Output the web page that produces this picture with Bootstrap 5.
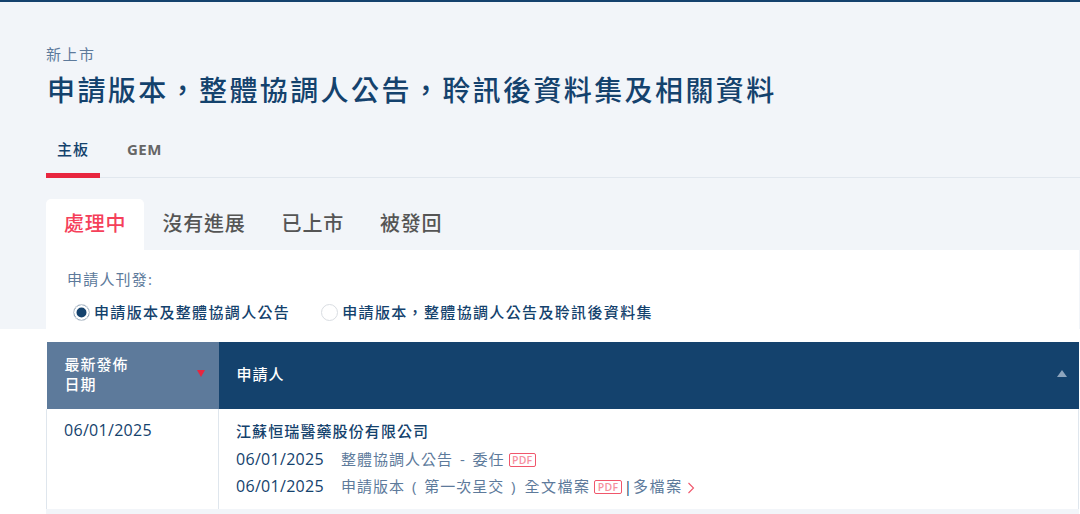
<!DOCTYPE html>
<html lang="zh-Hant">
<head>
    <meta charset="UTF-8">
    <title>新上市</title>
    <link href="https://cdn.jsdelivr.net/npm/bootstrap@5.3.0/dist/css/bootstrap.min.css" rel="stylesheet">
    <style>
        html, body { height: 514px; overflow: hidden; }
        body {
            font-family: "Open Sans", "Noto Sans CJK TC", sans-serif;
            color: #14426d;
            background: linear-gradient(#f2f5f9 329px, #fff 329px);
            border-top: 2px solid #14426d;
        }
        .page-wrap { padding-left: 46px; padding-right: 1px; }
        .crumb { font-size: 15px; letter-spacing: 1.5px; color: #5d7a9b; padding-top: 40px; line-height: 24px; margin: 0; }
        .page-title { font-size: 28px; font-weight: 500; letter-spacing: 2.4px; color: #14426d; line-height: 40px; margin: 4px 0 0 1px; }
        .board-tabs { margin-top: 25px; border-bottom: 1px solid #e1e7ee; margin-right: -1px; height: 43px; }
        .board-tabs .nav-link { font-size: 15px; font-weight: 500; letter-spacing: 1px; color: #666; padding: 0; width: 54px; text-align: center; height: 43px; line-height: 29px; border-radius: 0; }
        .board-tabs .nav-link.gem { width: auto; font-weight: 700; letter-spacing: .5px; }
        .board-tabs .nav-item + .nav-item { margin-left: 27px; }
        .board-tabs .nav-link.active { color: #14426d; border-bottom: 5px solid #e8263f; }
        .status-tabs { margin-top: 21px; height: 51px; }
        .status-tabs .nav-link { font-size: 20px; font-weight: 500; letter-spacing: .8px; color: #555; padding: 0 18px 2px; line-height: 49px; height: 51px; border-radius: 0; }
        .status-tabs .nav-link.active { background: #fff; color: #f5405a; border-radius: 5px 5px 0 0; }
        .filter-panel { background: #fff; height: 92px; padding: 18px 21px 0; }
        .filter-label { font-size: 15px; letter-spacing: 1.2px; color: #5d7a9b; line-height: 22px; }
        .radio-row { margin-top: 11px; gap: 31px; padding-left: 6px; }
        .radio-item { gap: 4px; font-size: 15px; font-weight: 500; letter-spacing: 1.35px; line-height: 22px; color: #14426d; }
        .radio-dot { width: 17px; height: 17px; border: 1px solid #d9dde2; border-radius: 50%; background: #fff; }
        .radio-dot.checked { background: #14426d; box-shadow: inset 0 0 0 2.5px #fff; }
        .listing-table { table-layout: fixed; width: 100%; margin: 0; border-collapse: collapse; }
        .listing-table th { background: #14426d; color: #fff; font-size: 15px; font-weight: 500; letter-spacing: 1px; height: 67px; padding: 0 18px 4px; line-height: 20px; vertical-align: middle; border: 0; }
        .listing-table th.sorted { background: #5d7a9b; width: 172px; }
        .sort-down { width: 0; height: 0; border-left: 4.5px solid transparent; border-right: 4.5px solid transparent; border-top: 7px solid #e8263f; margin-right: -4px; }
        .sort-up { width: 0; height: 0; border-left: 5px solid transparent; border-right: 5px solid transparent; border-bottom: 7px solid #8ea5bd; margin-right: -6px; }
        .listing-table td { height: 100px; padding: 11px 17px 0; vertical-align: top; font-size: 16px; color: #14426d; border: 0; border-left: 1px solid #dfe6ed; line-height: 28px; letter-spacing: .3px; }
        .listing-table td:first-child { padding-top: 7px; }
        .listing-table td:last-child { border-right: 1px solid #dfe6ed; }
        .row-name { font-size: 15px; font-weight: 500; letter-spacing: 1.1px; line-height: 23px; color: #14426d; }
        .doc-line { line-height: 27px; white-space: nowrap; }
        .doc-line:nth-child(2) { margin-top: 3px; }
        .doc-date { display: inline-block; width: 105px; }
        .doc-link { color: #5d7a9b; font-size: 15px; letter-spacing: 1px; word-spacing: 2px; }
        .doc-full { margin-left: 1px; letter-spacing: 1.5px; }
        .doc-multi { letter-spacing: 1.6px; }
        .pdf-tag { display: inline-block; border: 1px solid #f0566b; border-radius: 2px; color: #f6909e; font-size: 10.5px; font-weight: 600; line-height: 12px; padding: 0 2.5px; margin-left: -3px; letter-spacing: .2px; word-spacing: 0; vertical-align: 1px; background: #fff; }
        .pipe { color: #14426d; letter-spacing: 0; margin: 0 1px 0 2px; }
        .more-arrow { margin-left: -3px; }
        .row-gap { height: 5px; background: #f2f5f9; }
    </style>
</head>
<body>
<div class="page-wrap">
    <p class="crumb">新上市</p>
    <h1 class="page-title">申請版本，整體協調人公告，聆訊後資料集及相關資料</h1>

    <ul class="nav board-tabs">
        <li class="nav-item"><a class="nav-link active" href="#">主板</a></li>
        <li class="nav-item"><a class="nav-link gem" href="#">GEM</a></li>
    </ul>

    <ul class="nav status-tabs">
        <li class="nav-item"><a class="nav-link active" href="#">處理中</a></li>
        <li class="nav-item"><a class="nav-link" href="#">沒有進展</a></li>
        <li class="nav-item"><a class="nav-link" href="#">已上市</a></li>
        <li class="nav-item"><a class="nav-link" href="#">被發回</a></li>
    </ul>

    <div class="filter-panel">
        <div class="filter-label">申請人刊發:</div>
        <div class="d-flex radio-row">
            <div class="d-flex align-items-center radio-item"><span class="radio-dot checked"></span>申請版本及整體協調人公告</div>
            <div class="d-flex align-items-center radio-item"><span class="radio-dot"></span>申請版本，整體協調人公告及聆訊後資料集</div>
        </div>
    </div>

    <table class="listing-table">
        <thead>
            <tr>
                <th class="sorted">
                    <div class="d-flex justify-content-between align-items-center"><span>最新發佈<br>日期</span><span class="sort-down"></span></div>
                </th>
                <th>
                    <div class="d-flex justify-content-between align-items-center"><span>申請人</span><span class="sort-up"></span></div>
                </th>
            </tr>
        </thead>
        <tbody>
            <tr>
                <td>06/01/2025</td>
                <td>
                    <div class="row-name">江蘇恒瑞醫藥股份有限公司</div>
                    <div class="doc-line"><span class="doc-date">06/01/2025</span><span class="doc-link">整體協調人公告 - 委任 <span class="pdf-tag">PDF</span></span></div>
                    <div class="doc-line"><span class="doc-date">06/01/2025</span><span class="doc-link">申請版本 ( 第一次呈交 ) <span class="doc-full">全文檔案</span> <span class="pdf-tag">PDF</span><span class="pipe">|</span><span class="doc-multi">多檔案</span>
                        <svg class="more-arrow" width="8" height="12" viewBox="0 0 8 12" fill="none" stroke="#f0566b" stroke-width="1.1"><path d="M1.5 1l5 5-5 5"/></svg></span></div>
                </td>
            </tr>
        </tbody>
    </table>
    <div class="row-gap"></div>
</div>
</body>
</html>
